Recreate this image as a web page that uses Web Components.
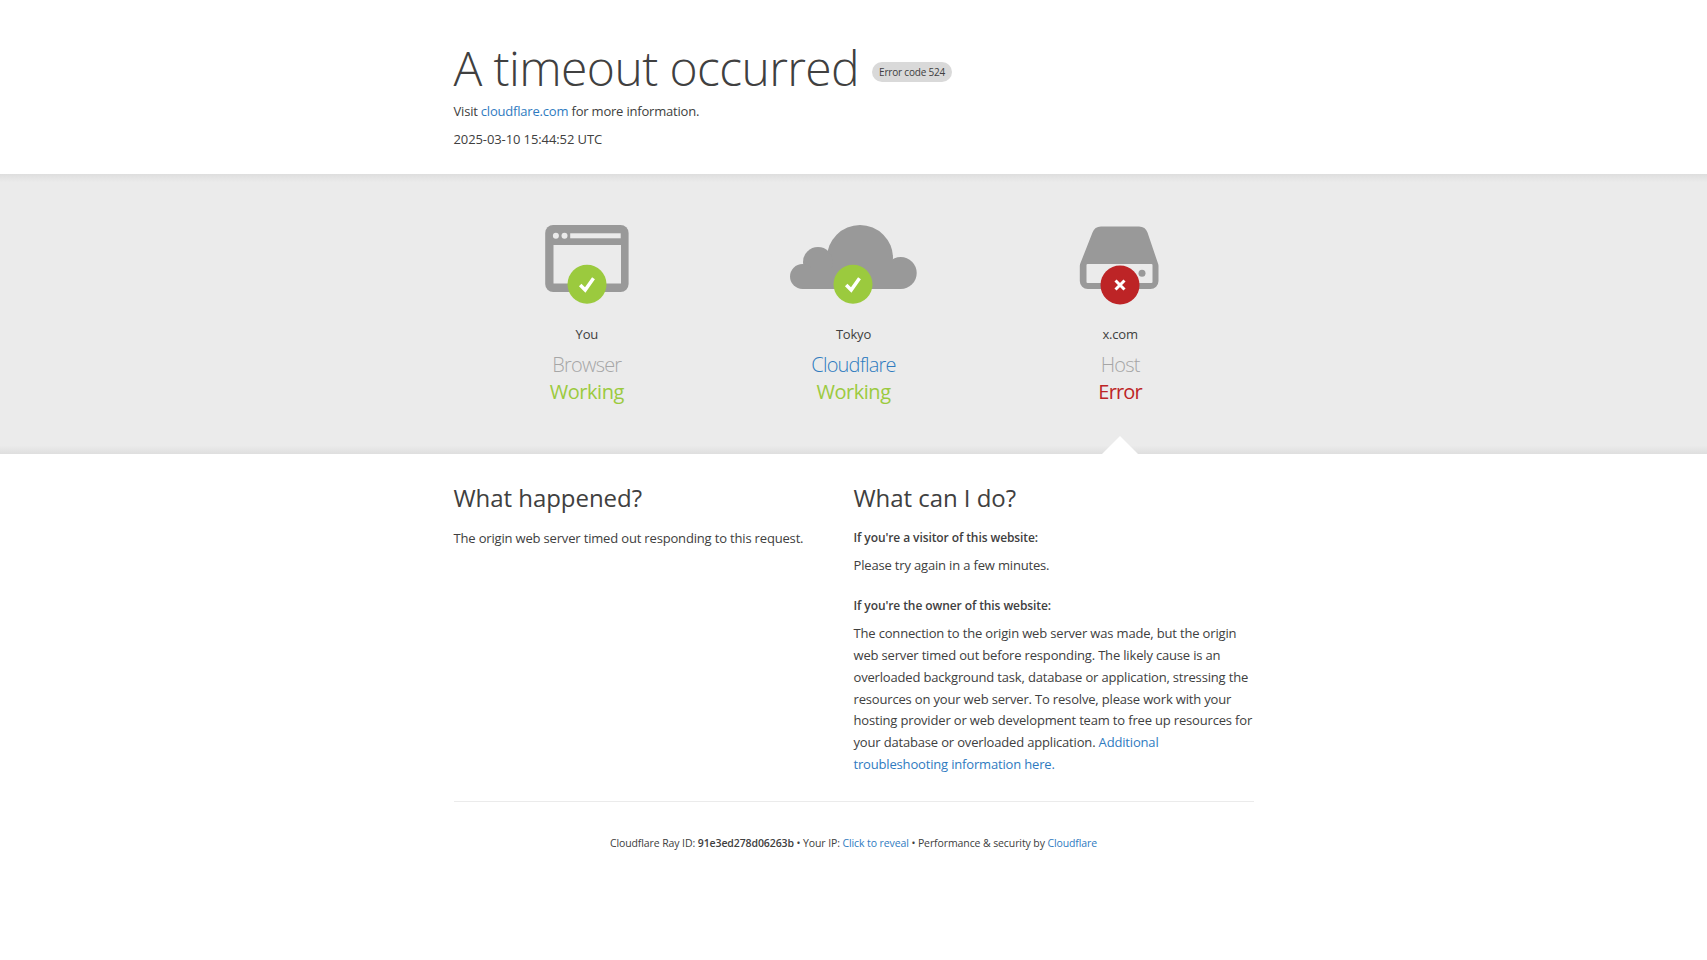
<!DOCTYPE html>
<html>
<head>
<meta charset="utf-8">
<title>A timeout occurred</title>
<style>
    html, body { margin: 0; padding: 0; background: #fff; }
    body { font-family: "Open Sans", "Liberation Sans", sans-serif; color: #404040; }
</style>
</head>
<body>
<error-page></error-page>

<template id="status-icons">
    <svg data-icon="browser" width="130" height="90" viewBox="0 0 130 90">
        <rect x="23.2" y="5" width="83.4" height="67" rx="8" fill="#999"/>
        <rect x="31.5" y="25" width="67.5" height="38.5" fill="#ebebeb"/>
        <circle cx="33.9" cy="15.7" r="3" fill="#ebebeb"/>
        <circle cx="42.5" cy="15.7" r="3" fill="#ebebeb"/>
        <rect x="48.2" y="13.3" width="50.5" height="5" fill="#ebebeb"/>
    </svg>
    <svg data-icon="cloud" width="130" height="90" viewBox="0 0 130 90">
        <g fill="#999">
            <circle cx="72" cy="38" r="33"/>
            <circle cx="30" cy="42" r="15"/>
            <circle cx="14.500" cy="56.500" r="12.500"/>
            <circle cx="112.700" cy="53" r="16"/>
            <rect x="14.500" y="48" width="98" height="21"/>
        </g>
    </svg>
    <svg data-icon="host" width="130" height="90" viewBox="0 0 130 90">
        <path fill="#999" d="M46 6.500H84a9 9 0 0 1 8.500 6L103 43.500a6 6 0 0 1 .5 2.500V61a8 8 0 0 1-8 8H32.800a8 8 0 0 1-8-8V46a6 6 0 0 1 .5-2.500L37.500 12.500a9 9 0 0 1 8.500-6z"/>
        <rect x="31.500" y="44" width="66" height="19" rx="1" fill="#ebebeb"/>
        <circle cx="87" cy="53.300" r="3.500" fill="#999"/>
    </svg>
</template>

<script>
class StatusItem extends HTMLElement {
    constructor() {
        super();
        this.attachShadow({ mode: 'open' });
    }

    connectedCallback() {
        const ok = this.getAttribute('state') === 'ok';
        const icon = document.getElementById('status-icons').content
            .querySelector(`[data-icon="${this.getAttribute('icon')}"]`).cloneNode(true);
        const badge = ok
            ? '<path d="M58.200 65l5 5 8.300-11.700" fill="none" stroke="#fff" stroke-width="3.500"/>'
            : '<path d="M60.500 60.500l9 9m0-9l-9 9" fill="none" stroke="#fff" stroke-width="3"/>';
        this.shadowRoot.innerHTML = `
            <style>
                :host {
                    display: flex;
                    flex-direction: column;
                    align-items: center;
                    text-align: center;
                }
                .art { position: relative; width: 130px; height: 90px; margin-bottom: 13px; }
                .art svg { position: absolute; left: 0; top: 0; }
                .place { font-size: 13px; line-height: 22px; letter-spacing: -.2px; color: #404040; }
                .name { font-size: 20px; font-weight: 300; line-height: 26px; letter-spacing: -.8px; margin-top: 7px; color: #a6a6a6; }
                .name.link { color: #2f7bbf; }
                .state { font-size: 20px; line-height: 27px; letter-spacing: -.45px; font-weight: 400; color: #9bca3e; }
                .state.error { color: #bd2426; letter-spacing: -.8px; }
            </style>
            <div class="art"></div>
            <div class="place"><slot name="place"></slot></div>
            <div class="name ${this.hasAttribute('link') ? 'link' : ''}"><slot name="name"></slot></div>
            <div class="state ${ok ? '' : 'error'}">${ok ? 'Working' : 'Error'}</div>
        `;
        const art = this.shadowRoot.querySelector('.art');
        art.appendChild(icon);
        art.insertAdjacentHTML('beforeend', `
            <svg width="130" height="90" viewBox="0 0 130 90">
                <circle cx="65" cy="${ok ? 64.3 : 65}" r="19.500" fill="${ok ? '#9bca3e' : '#bd2426'}"/>
                ${badge}
            </svg>`);
    }
}
customElements.define('status-item', StatusItem);

class StatusBand extends HTMLElement {
    constructor() {
        super();
        this.attachShadow({ mode: 'open' });
        this.shadowRoot.innerHTML = `
            <style>
                :host {
                    display: block;
                    position: relative;
                    height: 280px;
                    box-sizing: border-box;
                    padding-top: 46px;
                    background: linear-gradient(#dedede, #ebebeb 3%, #ebebeb 97%, #dedede);
                }
                .row {
                    width: 800px;
                    margin: 0 auto;
                    display: grid;
                    grid-template-columns: repeat(3, 1fr);
                }
                .arrow {
                    position: absolute;
                    left: 1102px;
                    bottom: 0;
                    width: 0;
                    height: 0;
                    border-left: 18px solid transparent;
                    border-right: 18px solid transparent;
                    border-bottom: 18px solid #fff;
                }
            </style>
            <div class="row"><slot></slot></div>
            <div class="arrow"></div>
        `;
    }
}
customElements.define('status-band', StatusBand);

class ErrorHeader extends HTMLElement {
    constructor() {
        super();
        this.attachShadow({ mode: 'open' });
        this.shadowRoot.innerHTML = `
            <style>
                :host { display: block; height: 174px; box-sizing: border-box; padding-top: 36px; }
                .wrap { width: 800px; margin: 0 auto; font-size: 13px; }
                .title { display: flex; align-items: center; gap: 13px; height: 64px; }
                h1 { margin: 0; font-size: 48px; font-weight: 300; line-height: 64px; letter-spacing: -.6px; color: #404040; }
                .code {
                    background: #d9d9d9;
                    border-radius: 10px;
                    font-size: 10px;
                    line-height: 20px;
                    letter-spacing: -.2px;
                    padding: 0 7px;
                    margin-top: 8px;
                }
                p { margin: 0; line-height: 22px; }
                p.visit { letter-spacing: -.2px; }
                p.time { margin-top: 6px; letter-spacing: -.1px; }
                a { color: #2f7bbf; text-decoration: none; }
            </style>
            <div class="wrap">
                <div class="title"><h1>A timeout occurred</h1><span class="code">Error code 524</span></div>
                <p class="visit">Visit <a href="#">cloudflare.com</a> for more information.</p>
                <p class="time">2025-03-10 15:44:52 UTC</p>
            </div>
        `;
    }
}
customElements.define('error-header', ErrorHeader);

class ErrorDetails extends HTMLElement {
    constructor() {
        super();
        this.attachShadow({ mode: 'open' });
        this.shadowRoot.innerHTML = `
            <style>
                :host { display: block; }
                .wrap {
                    width: 800px;
                    margin: 0 auto;
                    padding-top: 26px;
                    display: grid;
                    grid-template-columns: 400px 400px;
                    font-size: 13px;
                    line-height: 21.760px;
                    letter-spacing: -.17px;
                }
                h2 { margin: 0 0 11px; font-size: 24px; font-weight: 400; line-height: 36px; letter-spacing: -.05px; }
                h5 { margin: 0 0 6px; font-size: 12px; font-weight: 600; line-height: 21.760px; letter-spacing: -.09px; }
                p { margin: 0 0 18px; }
                .lead { margin-top: 12px; }
                h5 + .long { margin-top: 7px; }
                a { color: #2f7bbf; text-decoration: none; }
            </style>
            <div class="wrap">
                <div>
                    <h2>What happened?</h2>
                    <p class="lead">The origin web server timed out responding to this request.</p>
                </div>
                <div>
                    <h2>What can I do?</h2>
                    <h5>If you're a visitor of this website:</h5>
                    <p>Please try again in a few minutes.</p>
                    <h5>If you're the owner of this website:</h5>
                    <p class="long">The connection to the origin web server was made, but the origin web server timed out before responding. The likely cause is an overloaded background task, database or application, stressing the resources on your web server. To resolve, please work with your hosting provider or web development team to free up resources for your database or overloaded application. <a href="#">Additional troubleshooting information here.</a></p>
                </div>
            </div>
        `;
    }
}
customElements.define('error-details', ErrorDetails);

class ErrorFooter extends HTMLElement {
    constructor() {
        super();
        this.attachShadow({ mode: 'open' });
        this.shadowRoot.innerHTML = `
            <style>
                :host { display: block; }
                .wrap {
                    width: 800px;
                    margin: 7px auto 0;
                    border-top: 1px solid #ebebeb;
                    padding-top: 31px;
                    text-align: center;
                    font-size: 10.500px;
                    line-height: 20px;
                    letter-spacing: -.1px;
                }
                b { font-weight: 600; }
                a { color: #2f7bbf; text-decoration: none; }
            </style>
            <div class="wrap">
                Cloudflare Ray ID: <b>91e3ed278d06263b</b> • Your IP: <a href="#">Click to reveal</a> • Performance &amp; security by <a href="#">Cloudflare</a>
            </div>
        `;
    }
}
customElements.define('error-footer', ErrorFooter);

class ErrorPage extends HTMLElement {
    constructor() {
        super();
        this.attachShadow({ mode: 'open' });
        this.shadowRoot.innerHTML = `
            <style>:host { display: block; }</style>
            <error-header></error-header>
            <status-band>
                <status-item icon="browser" state="ok"><span slot="place">You</span><span slot="name">Browser</span></status-item>
                <status-item icon="cloud" state="ok" link><span slot="place">Tokyo</span><span slot="name">Cloudflare</span></status-item>
                <status-item icon="host" state="error"><span slot="place">x.com</span><span slot="name">Host</span></status-item>
            </status-band>
            <error-details></error-details>
            <error-footer></error-footer>
        `;
    }
}
customElements.define('error-page', ErrorPage);
</script>
</body>
</html>
